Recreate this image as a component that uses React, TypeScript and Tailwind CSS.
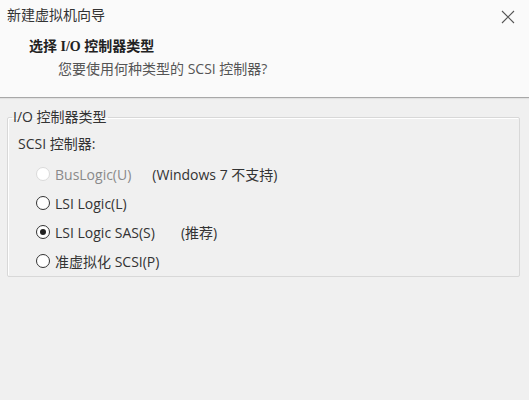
import React from 'react';

const ui = { fontFamily: '"Open Sans", "Noto Sans CJK SC", sans-serif' };
const serifHead = { fontFamily: '"Liberation Serif", "Noto Sans CJK SC", serif' };

function Radio({ checked, disabled }: { checked?: boolean; disabled?: boolean }) {
  return (
    <span
      className={`flex h-[14px] w-[14px] items-center justify-center rounded-full border bg-white ${
        disabled ? 'border-[#dadada]' : 'border-[#333333]'
      }`}
    >
      {checked && <span className="h-[6px] w-[6px] rounded-full bg-[#222222]" />}
    </span>
  );
}

export default function App() {
  const options = [
    { label: 'BusLogic(U)', note: '(Windows 7 不支持)', noteGap: 'ml-[21px]', disabled: true },
    { label: 'LSI Logic(L)' },
    { label: 'LSI Logic SAS(S)', note: '(推荐)', noteGap: 'ml-[26px]', checked: true },
    { label: '准虚拟化 SCSI(P)' },
  ];

  return (
    <div className="flex h-[400px] w-[529px] flex-col overflow-hidden bg-[#f0f0f0] text-[14px] text-[#333333]" style={ui}>
      {/* Header */}
      <header className="flex h-[98px] flex-col border-b border-[#a8a8a8] bg-[#fafafa] shadow-[0_1px_1px_rgba(0,0,0,0.06)]">
        <div className="flex items-center justify-between pl-[7px] pr-[14px] pt-[5px]">
          <span className="leading-[20px]">新建虚拟机向导</span>
          <svg width="14" height="14" viewBox="0 0 14 14" className="mt-[3px]">
            <path d="M1 1 L13 13 M13 1 L1 13" stroke="#555" strokeWidth="1.1" />
          </svg>
        </div>
        <div className="mt-[12px] pl-[29px] text-[14px] font-bold leading-[20px] text-[#222222]" style={serifHead}>
          选择 I/O 控制器类型
        </div>
        <div className="mt-[2px] pl-[58px] leading-[20px] text-[#555555]">您要使用何种类型的 SCSI 控制器?</div>
      </header>

      {/* Group box */}
      <fieldset className="ml-[7px] mr-[9px] mt-[10px] h-[169px] rounded-[2px] border border-[#d8d8d8] px-[4px] shadow-[inset_1px_1px_0_#ffffff]">
        <legend className="px-[1px] leading-[18px]">I/O 控制器类型</legend>
        <div className="pl-[6px] pt-[8px] leading-[20px]">SCSI 控制器:</div>
        <div className="mt-[10px] flex flex-col gap-[9px] pl-[24px]">
          {options.map((o) => (
            <div key={o.label} className="flex h-[20px] items-center">
              <Radio checked={o.checked} disabled={o.disabled} />
              <span className={`ml-[5px] ${o.disabled ? 'text-[#8a8a8a]' : ''}`}>{o.label}</span>
              {o.note && <span className={o.noteGap}>{o.note}</span>}
            </div>
          ))}
        </div>
      </fieldset>
    </div>
  );
}
